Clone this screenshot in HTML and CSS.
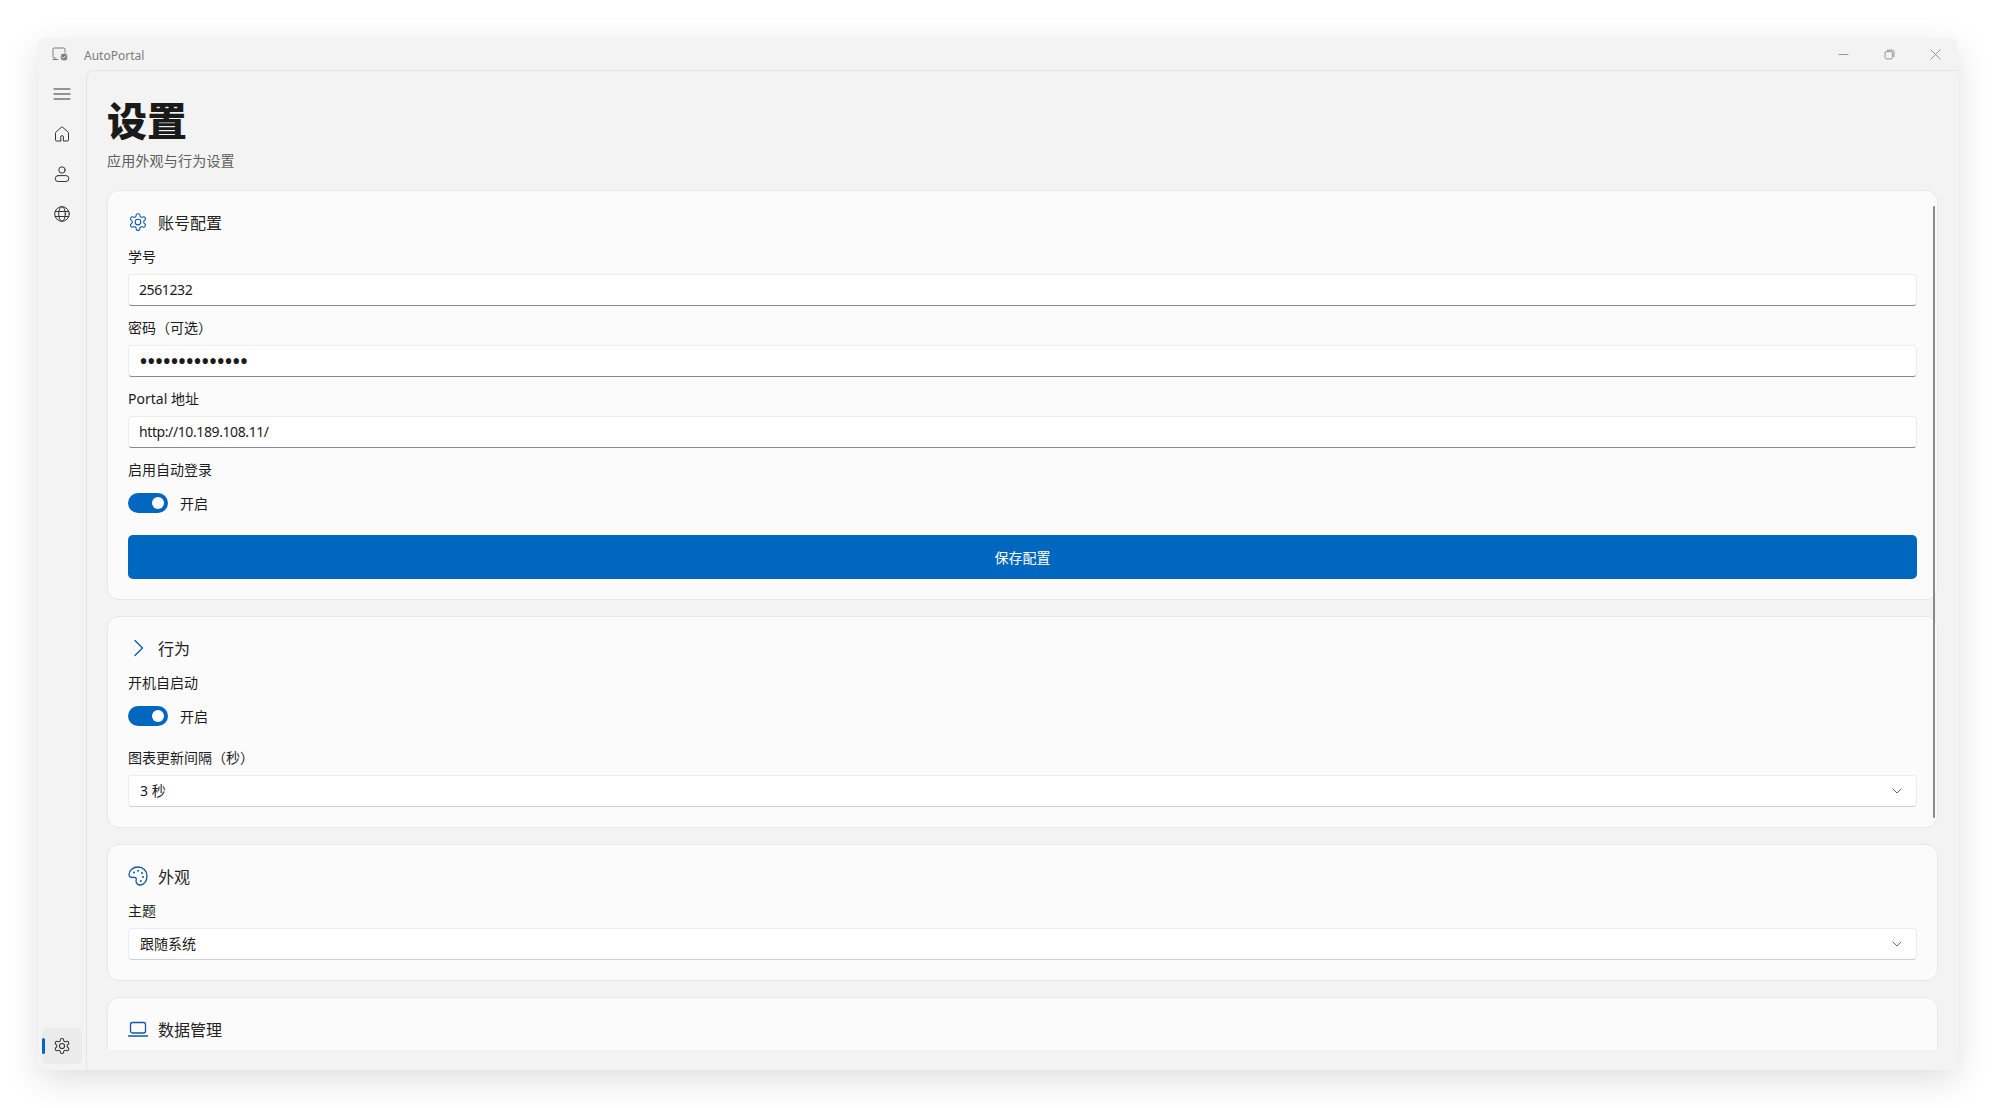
FILE: index.html
```html
<!DOCTYPE html>
<html lang="zh-CN">
<head>
  <meta charset="UTF-8">
  <title>AutoPortal</title>
  <link rel="stylesheet" href="styles.css">
</head>
<body>
  <svg class="defs" width="0" height="0" aria-hidden="true">
    <symbol id="gear" viewBox="0 0 24 24">
      <path d="M12.22 2h-.44a2 2 0 0 0-2 2v.18a2 2 0 0 1-1 1.73l-.43.25a2 2 0 0 1-2 0l-.15-.08a2 2 0 0 0-2.73.73l-.22.38a2 2 0 0 0 .73 2.73l.15.1a2 2 0 0 1 1 1.72v.51a2 2 0 0 1-1 1.74l-.15.09a2 2 0 0 0-.73 2.73l.22.38a2 2 0 0 0 2.73.73l.15-.08a2 2 0 0 1 2 0l.43.25a2 2 0 0 1 1 1.73V20a2 2 0 0 0 2 2h.44a2 2 0 0 0 2-2v-.18a2 2 0 0 1 1-1.73l.43-.25a2 2 0 0 1 2 0l.15.08a2 2 0 0 0 2.73-.73l.22-.39a2 2 0 0 0-.73-2.73l-.15-.08a2 2 0 0 1-1-1.74v-.5a2 2 0 0 1 1-1.74l.15-.09a2 2 0 0 0 .73-2.73l-.22-.38a2 2 0 0 0-2.73-.73l-.15.08a2 2 0 0 1-2 0l-.43-.25a2 2 0 0 1-1-1.73V4a2 2 0 0 0-2-2z"/>
      <circle cx="12" cy="12" r="3.4"/>
    </symbol>
    <symbol id="chevron-down" viewBox="0 0 12 12">
      <path d="M2 4l4 4 4-4"/>
    </symbol>
  </svg>

  <div class="window">
    <header class="titlebar">
      <svg class="app-icon" viewBox="0 0 16 14">
        <path class="app-icon-line" d="M4 11H2.2A1.2 1.2 0 0 1 1 9.800V2.200A1.200 1.200 0 0 1 2.200 1h9.600A1.200 1.200 0 0 1 13 2.200V6M1 12.500h5"/>
        <circle class="app-icon-badge" cx="12" cy="10" r="4"/>
        <path class="app-icon-check" d="M10.200 10l1.300 1.300 2.300-2.500"/>
      </svg>
      <span class="app-name">AutoPortal</span>
      <div class="win-btns">
        <span class="win-btn"><svg viewBox="0 0 12 12"><path d="M1 6h10"/></svg></span>
        <span class="win-btn"><svg viewBox="0 0 12 12"><path d="M3.500 1.200H9A1.800 1.800 0 0 1 10.800 3v5.500"/><rect x="1.200" y="2.800" width="8" height="8" rx="1.500"/></svg></span>
        <span class="win-btn"><svg viewBox="0 0 12 12"><path d="M1 1l10 10M11 1L1 11"/></svg></span>
      </div>
    </header>

    <div class="main">
      <nav class="sidebar">
        <div class="nav-item">
          <svg class="nav-icon" viewBox="0 0 16 16"><path d="M0 3h16M0 8h16M0 13h16"/></svg>
        </div>
        <div class="nav-item">
          <svg class="nav-icon" viewBox="0 0 16 16"><path d="M6.600 15H2.600A1.100 1.100 0 0 1 1.500 13.900V7.100c0-.5.2-.9.6-1.200L7.200 1.400a1.200 1.200 0 0 1 1.600 0l5.100 4.500c.4.300.6.700.6 1.200v6.800a1.100 1.100 0 0 1-1.100 1.100H9.400V11a1.400 1.400 0 0 0-2.800 0z"/></svg>
        </div>
        <div class="nav-item">
          <svg class="nav-icon" viewBox="0 0 16 16"><circle cx="8" cy="4" r="3.200"/><rect x="1.200" y="9.600" width="13.600" height="5.900" rx="2.950"/></svg>
        </div>
        <div class="nav-item">
          <svg class="nav-icon" viewBox="0 0 16 16"><circle cx="8" cy="8" r="7.300"/><ellipse cx="8" cy="8" rx="3.300" ry="7.300"/><path d="M1.300 5.500h13.400M1.300 10.500h13.400"/></svg>
        </div>
        <div class="nav-item nav-item-active">
          <svg class="nav-icon nav-gear"><use href="#gear"/></svg>
        </div>
      </nav>

      <main class="content">
        <h1 class="page-title">设置</h1>
        <p class="page-sub">应用外观与行为设置</p>

        <div class="scroller">
          <div class="scrollbar"></div>

          <section class="card">
            <div class="card-head">
              <svg class="card-icon"><use href="#gear"/></svg>
              <span>账号配置</span>
            </div>
            <div class="field">
              <label class="label">学号</label>
              <div class="input">2561232</div>
            </div>
            <div class="field">
              <label class="label">密码<span class="punct">（</span>可选<span class="punct">）</span></label>
              <div class="input input-pass">••••••••••••••</div>
            </div>
            <div class="field">
              <label class="label">Portal 地址</label>
              <div class="input">http://10.189.108.11/</div>
            </div>
            <div class="field field-toggle">
              <label class="label">启用自动登录</label>
              <div class="toggle-row"><span class="toggle"></span><span>开启</span></div>
            </div>
            <button class="save-btn">保存配置</button>
          </section>

          <section class="card">
            <div class="card-head">
              <svg class="card-icon" viewBox="0 0 20 20"><path d="M7 2.500L14.500 10 7 17.500"/></svg>
              <span>行为</span>
            </div>
            <div class="field field-toggle field-tight">
              <label class="label">开机自启动</label>
              <div class="toggle-row"><span class="toggle"></span><span>开启</span></div>
            </div>
            <div class="field field-last">
              <label class="label">图表更新间隔<span class="punct">（</span>秒<span class="punct">）</span></label>
              <div class="select">3 秒<svg class="select-arrow"><use href="#chevron-down"/></svg></div>
            </div>
          </section>

          <section class="card">
            <div class="card-head">
              <svg class="card-icon" viewBox="0 0 20 20">
                <path d="M10 1C5 1 1 4.600 1 8.600c0 2 1.700 2.900 3.400 2.900 1.500 0 3-.4 3.700.6.800 1.200-.6 2.300.1 4 .6 1.900 2.100 2.900 3.800 2.900 4.200 0 7-4.200 7-9C19 4.800 15 1 10 1z"/>
                <circle class="dot" cx="6" cy="6.400" r="1"/>
                <circle class="dot" cx="10.200" cy="4.800" r="1"/>
                <circle class="dot" cx="14" cy="7" r="1"/>
                <circle class="dot" cx="15" cy="11" r="1"/>
                <circle class="dot" cx="12.800" cy="15" r="1"/>
              </svg>
              <span>外观</span>
            </div>
            <div class="field field-last">
              <label class="label">主题</label>
              <div class="select">跟随系统<svg class="select-arrow"><use href="#chevron-down"/></svg></div>
            </div>
          </section>

          <section class="card">
            <div class="card-head">
              <svg class="card-icon" viewBox="0 0 20 20"><rect x="2.500" y="3.500" width="15" height="10.500" rx="2"/><path d="M.5 17h19"/></svg>
              <span>数据管理</span>
            </div>
          </section>
        </div>
      </main>
    </div>
  </div>
</body>
</html>
```

FILE: styles.css
```css
html, body {
  height: 100%;
  overflow: hidden;
}
body {
  margin: 0;
  padding: 38px;
  box-sizing: border-box;
  background: #fff;
  font-family: "Noto Sans", "Noto Sans CJK SC", sans-serif;
  font-size: 14px;
  color: #1b1b1b;
}
.defs {
  position: absolute;
}
svg {
  fill: none;
  stroke: currentColor;
  stroke-width: 1;
  stroke-linecap: round;
  stroke-linejoin: round;
}

.window {
  width: 1920px;
  height: 1032px;
  display: flex;
  flex-direction: column;
  background: #f3f3f3;
  border-radius: 8px;
  box-shadow: 0 10px 34px rgba(0,0,0,0.13);
}

/* title bar */
.titlebar {
  height: 32px;
  flex: none;
  display: flex;
  align-items: center;
  padding-left: 14px;
  color: #7c7c7c;
}
.app-icon {
  width: 16px;
  height: 14px;
  margin-right: 16px;
  overflow: visible;
}
.app-icon-badge {
  fill: #7c7c7c;
  stroke: #f3f3f3;
  stroke-width: 1;
}
.app-icon-check {
  stroke: #f3f3f3;
}
.app-name {
  font-size: 12px;
  margin-top: 2px;
}
.win-btns {
  margin-left: auto;
  display: flex;
}
.win-btn {
  width: 46px;
  height: 32px;
  display: flex;
  align-items: center;
  justify-content: center;
  color: #8c8c8c;
}
.win-btn svg {
  width: 11px;
  height: 11px;
}

/* sidebar and panel */
.main {
  flex: 1;
  min-height: 0;
  display: flex;
}
.sidebar {
  width: 48px;
  flex: none;
  display: flex;
  flex-direction: column;
  align-items: flex-start;
  padding: 4px 0 6px 4px;
  box-sizing: border-box;
}
.nav-item {
  position: relative;
  width: 40px;
  height: 40px;
  display: flex;
  align-items: center;
  justify-content: center;
  color: #333;
}
.nav-icon {
  width: 16px;
  height: 16px;
  overflow: visible;
}
.nav-gear {
  width: 18px;
  height: 18px;
  stroke-width: 1.4;
}
.nav-item-active {
  height: 36px;
  margin-top: auto;
  background: #ebebeb;
  border-radius: 5px;
}
.nav-item-active::before {
  content: "";
  position: absolute;
  left: 0;
  top: 10px;
  width: 3px;
  height: 16px;
  border-radius: 2px;
  background: #0067c0;
}
.content {
  flex: 1;
  min-width: 0;
  display: flex;
  flex-direction: column;
  padding: 0 20px 20px 20px;
  border-left: 1px solid #e5e5e5;
  border-top: 1px solid #e5e5e5;
  border-top-left-radius: 8px;
}
.page-title {
  margin: 22px 0 0 0;
  font-size: 40px;
  line-height: 56px;
  font-weight: 900;
  color: #1a1a1a;
}
.page-sub {
  margin: 2px 0 19px 0;
  line-height: 20px;
  letter-spacing: 0.2px;
  color: #5d5d5d;
}

/* cards */
.scroller {
  position: relative;
  flex: 1;
  min-height: 0;
  overflow: hidden;
}
.scrollbar {
  position: absolute;
  right: 3px;
  top: 16px;
  width: 2px;
  height: 612px;
  background: #8a8a8a;
  border-radius: 1px;
}
.card {
  background: #fbfbfb;
  border: 1px solid #e8e8e8;
  border-radius: 12px;
  padding: 20px;
  margin-bottom: 16px;
}
.card-head {
  height: 22px;
  display: flex;
  align-items: center;
  gap: 10px;
  margin-bottom: 13px;
  font-size: 16px;
  color: #222;
}
.card-icon {
  width: 20px;
  height: 20px;
  color: #0f5a9e;
  stroke-width: 1.3;
  overflow: visible;
}
.card-icon .dot {
  fill: #0f5a9e;
  stroke: none;
}
.field {
  margin-bottom: 11px;
}
.field-toggle {
  margin-bottom: 22px;
}
.field-tight {
  margin-bottom: 21px;
}
.field-last {
  margin-bottom: 0;
}
.label {
  display: block;
  height: 20px;
  line-height: 21px;
  margin-bottom: 8px;
}
.punct {
  font-family: "Noto Sans CJK TC", sans-serif;
}
.field-toggle .label {
  margin-bottom: 14px;
}
.input, .select {
  position: relative;
  height: 32px;
  box-sizing: border-box;
  padding: 0 10px;
  line-height: 30px;
  background: #fff;
  border: 1px solid #ececec;
  border-radius: 4px;
  letter-spacing: -0.4px;
}
.input {
  border-bottom: 1px solid #8a8a8a;
}
.input-pass {
  font-size: 24px;
  letter-spacing: -1.3px;
}
.select {
  padding-left: 11px;
  border-bottom-color: #cfcfcf;
  letter-spacing: 0;
}
.select-arrow {
  position: absolute;
  right: 13px;
  top: 9px;
  width: 12px;
  height: 12px;
  color: #666;
}
.toggle-row {
  height: 20px;
  display: flex;
  align-items: center;
  gap: 12px;
}
.toggle {
  position: relative;
  width: 40px;
  height: 20px;
  border-radius: 10px;
  background: #0067c0;
}
.toggle::after {
  content: "";
  position: absolute;
  right: 4px;
  top: 4px;
  width: 12px;
  height: 12px;
  border-radius: 50%;
  background: #fff;
}
.save-btn {
  display: block;
  width: 100%;
  height: 44px;
  border: none;
  border-radius: 5px;
  background: #0067c0;
  color: #fff;
  font: inherit;
}
```
